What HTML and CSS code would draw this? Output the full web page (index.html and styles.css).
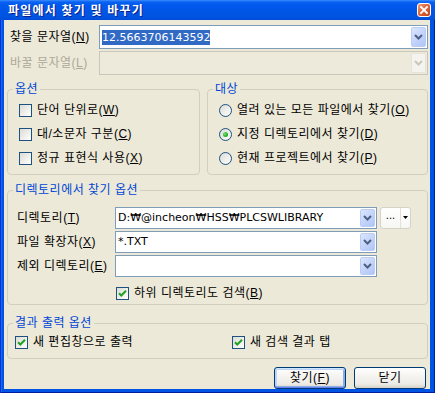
FILE: index.html
```html
<!DOCTYPE html>
<html lang="ko">
<head>
<meta charset="utf-8">
<title>파일에서 찾기 및 바꾸기</title>
<link rel="stylesheet" href="styles.css">
</head>
<body>
<div class="window">
  <div class="titlebar">
    <span class="title">파일에서 찾기 및 바꾸기</span>
    <span class="close">
      <svg width="14" height="14" viewBox="0 0 14 14">
        <defs>
          <linearGradient id="cg" x1="0" y1="0" x2="1" y2="1">
            <stop offset="0" stop-color="#F0A080"/>
            <stop offset="0.45" stop-color="#E0643A"/>
            <stop offset="1" stop-color="#C2401A"/>
          </linearGradient>
        </defs>
        <rect x="0.5" y="0.5" width="13" height="13" rx="2.5" fill="url(#cg)" stroke="#FFFFFF"/>
        <path d="M4 4 L10 10 M10 4 L4 10" stroke="#FFFFFF" stroke-width="1.8" stroke-linecap="square"/>
      </svg>
    </span>
  </div>

  <div class="client">
    <div class="toprow">
      <span class="lbl">찾을 문자열(<u>N</u>)</span>
      <div class="combo big">
        <span class="ctext"><span class="sel">12.5663706143592</span></span>
        <span class="dd"><svg width="9" height="6" viewBox="0 0 9 6"><path d="M1 1 L4.5 4.5 L8 1" fill="none" stroke="#4D6185" stroke-width="2"/></svg></span>
      </div>
    </div>
    <div class="toprow">
      <span class="lbl dis">바꿀 문자열(<u>L</u>)</span>
      <div class="combo big disabled">
        <span class="ctext"></span>
        <span class="dd"><svg width="9" height="6" viewBox="0 0 9 6"><path d="M1 1 L4.5 4.5 L8 1" fill="none" stroke="#C9C7BA" stroke-width="2"/></svg></span>
      </div>
    </div>

    <div class="groups">
      <fieldset class="group g-opt">
        <legend>옵션</legend>
        <div class="gbody opt-body">
          <label class="item"><span class="cb"></span><span class="t">단어 단위로(<u>W</u>)</span></label>
          <label class="item"><span class="cb"></span><span class="t">대/소문자 구분(<u>C</u>)</span></label>
          <label class="item"><span class="cb"></span><span class="t">정규 표현식 사용(<u>X</u>)</span></label>
        </div>
      </fieldset>
      <fieldset class="group g-target">
        <legend>대상</legend>
        <div class="gbody opt-body">
          <label class="item"><span class="rb"></span><span class="t">열려 있는 모든 파일에서 찾기(<u>O</u>)</span></label>
          <label class="item"><span class="rb on"></span><span class="t">지정 디렉토리에서 찾기(<u>D</u>)</span></label>
          <label class="item"><span class="rb"></span><span class="t">현재 프로젝트에서 찾기(<u>P</u>)</span></label>
        </div>
      </fieldset>
    </div>

    <fieldset class="group g-dir">
      <legend>디렉토리에서 찾기 옵션</legend>
      <div class="gbody dir-body">
        <span class="lbl">디렉토리(<u>T</u>)</span>
        <div class="combo">
          <span class="ctext">D:₩@incheon₩HSS₩PLCSWLIBRARY</span>
          <span class="dd"><svg width="9" height="6" viewBox="0 0 9 6"><path d="M1 1 L4.5 4.5 L8 1" fill="none" stroke="#4D6185" stroke-width="2"/></svg></span>
        </div>
        <div class="split">
          <span class="dots">...</span>
          <span class="arrow"><svg width="5" height="3" viewBox="0 0 5 3"><path d="M0 0 H5 L2.5 3 Z" fill="#000"/></svg></span>
        </div>

        <span class="lbl">파일 확장자(<u>X</u>)</span>
        <div class="combo">
          <span class="ctext">*.TXT</span>
          <span class="dd"><svg width="9" height="6" viewBox="0 0 9 6"><path d="M1 1 L4.5 4.5 L8 1" fill="none" stroke="#4D6185" stroke-width="2"/></svg></span>
        </div>
        <span></span>

        <span class="lbl">제외 디렉토리(<u>E</u>)</span>
        <div class="combo">
          <span class="ctext"></span>
          <span class="dd"><svg width="9" height="6" viewBox="0 0 9 6"><path d="M1 1 L4.5 4.5 L8 1" fill="none" stroke="#4D6185" stroke-width="2"/></svg></span>
        </div>
        <span></span>

        <label class="item sub"><span class="cb checked"><svg width="11" height="11" viewBox="0 0 11 11"><path d="M2 5.2 L4.3 7.5 L9 2.8" fill="none" stroke="#21A121" stroke-width="2"/></svg></span><span class="t">하위 디렉토리도 검색(<u>B</u>)</span></label>
      </div>
    </fieldset>

    <fieldset class="group g-out">
      <legend>결과 출력 옵션</legend>
      <div class="gbody out-body">
        <label class="item"><span class="cb checked"><svg width="11" height="11" viewBox="0 0 11 11"><path d="M2 5.2 L4.3 7.5 L9 2.8" fill="none" stroke="#21A121" stroke-width="2"/></svg></span><span class="t">새 편집창으로 출력</span></label>
        <label class="item"><span class="cb checked"><svg width="11" height="11" viewBox="0 0 11 11"><path d="M2 5.2 L4.3 7.5 L9 2.8" fill="none" stroke="#21A121" stroke-width="2"/></svg></span><span class="t">새 검색 결과 탭</span></label>
      </div>
    </fieldset>

    <div class="buttons">
      <button class="btn default">찾기(<u>F</u>)</button>
      <button class="btn">닫기</button>
    </div>
  </div>
</div>
</body>
</html>
```

FILE: styles.css
```css
* { box-sizing: border-box; }

html, body {
  margin: 0;
  padding: 0;
}

body {
  width: 435px;
  height: 393px;
  font-family: "Liberation Sans", "Noto Sans CJK KR", sans-serif;
  font-size: 12px;
  line-height: 14px;
  letter-spacing: 0.5px;
  color: #000;
  overflow: hidden;
}

u { text-decoration: underline; text-underline-offset: 1px; }

.window {
  width: 435px;
  height: 393px;
  background: #0054E3;
  padding: 0 5px 4px 4px;
  display: flex;
  flex-direction: column;
  box-shadow: inset 1px 0 0 #0831D9, inset -1px 0 0 #001EA0, inset 0 -1px 0 #001EA0, inset 2px 0 0 #166AEE;
}

.titlebar {
  height: 22px;
  margin: 0 -5px 0 -4px;
  padding: 0 4px 0 8px;
  display: flex;
  align-items: center;
  justify-content: space-between;
  background: linear-gradient(#3A8CFF 0px, #0A62F0 2px, #0058EE 5px, #0055E5 12px, #0053E0 18px, #0046D0 21px, #0040C8 22px);
}

.title {
  color: #fff;
  font-weight: bold;
  font-size: 12px;
  line-height: 14px;
  letter-spacing: 1.2px;
  text-shadow: 1px 1px 0 #0A1E88;
  padding-top: 1px;
}

.close {
  display: flex;
  width: 14px;
  height: 14px;
}

.client {
  flex: 1;
  background: #ECE9D8;
  padding: 5px 2px 0 3px;
  display: flex;
  flex-direction: column;
}

.toprow {
  display: grid;
  grid-template-columns: 92px 1fr;
  height: 24px;
  margin-bottom: 2px;
  align-items: center;
}

.toprow .lbl { padding-left: 3px; }

.lbl { white-space: nowrap; }
.lbl.dis { color: #ACA899; }

/* combo box */
.combo {
  display: flex;
  height: 22px;
  border: 1px solid #7F9DB9;
  background: #fff;
  padding: 1px;
}
.combo.big { height: 24px; }
.combo.disabled {
  border-color: #C9C7BA;
  background: #EDEADB;
}

.ctext {
  flex: 1;
  display: flex;
  align-items: center;
  padding-left: 1px;
  font-family: "DejaVu Sans", sans-serif;
  font-size: 11px;
  letter-spacing: 0;
  white-space: nowrap;
  overflow: hidden;
}

.sel {
  background: #316AC5;
  color: #fff;
  line-height: 15px;
}

.dd {
  width: 15px;
  display: flex;
  align-items: center;
  justify-content: center;
  border: 1px solid #BACDF7;
  border-radius: 2px;
  background: linear-gradient(135deg, #DCE6FD 0%, #C4D4FA 50%, #AFC5F5 100%);
}
.combo.disabled .dd {
  border-color: #E6E4DA;
  background: #F4F3EE;
}

/* group boxes */
.groups {
  display: flex;
  gap: 7px;
  margin-top: 5px;
}

.group {
  margin: 0;
  padding: 0;
  border: 1px solid #D0D0BF;
  border-radius: 4px;
  min-width: 0;
}

.group legend {
  margin-left: 5px;
  padding: 0 2px;
  height: 14px;
  line-height: 14px;
  color: #0046D5;
}

.g-opt { width: 193px; }
.g-target { flex: 1; }

.opt-body {
  padding: 2px 4px 4px 11px;
}

.item {
  display: flex;
  align-items: center;
  gap: 5px;
  white-space: nowrap;
}

.opt-body .item { height: 24px; }

.cb {
  width: 13px;
  height: 13px;
  flex: none;
  border: 1px solid #1C5180;
  background: linear-gradient(135deg, #DCDCD7 0%, #F0F0EC 60%, #FFFFFF 100%);
  display: flex;
  align-items: center;
  justify-content: center;
}

.rb {
  width: 13px;
  height: 13px;
  flex: none;
  border: 1px solid #1C5180;
  border-radius: 50%;
  background: linear-gradient(135deg, #DCDCD7 0%, #F0F0EC 60%, #FFFFFF 100%);
  display: flex;
  align-items: center;
  justify-content: center;
}
.rb.on::after {
  content: "";
  width: 5px;
  height: 5px;
  border-radius: 50%;
  background: radial-gradient(circle at 35% 35%, #7BE07B 0%, #2FB52F 50%, #1E961E 100%);
}

/* directory group */
.g-dir { margin-top: 8px; }

.dir-body {
  display: grid;
  grid-template-columns: 95px 262px 31px;
  column-gap: 3px;
  row-gap: 2px;
  grid-auto-rows: 22px;
  align-items: center;
  padding: 10px 0 3px 9px;
}

.dir-body .item.sub {
  grid-column: 2 / 4;
  margin-top: 2px;
  padding-left: 1px;
  height: 16px;
  align-self: end;
}

.split {
  height: 22px;
  display: flex;
  border: 1px solid #D5D2C8;
  border-radius: 3px;
  background: linear-gradient(#FFFFFF, #F6F6F3);
}
.dots {
  width: 20px;
  text-align: center;
  font-family: "DejaVu Sans", sans-serif;
  font-size: 10px;
  letter-spacing: 0;
  line-height: 16px;
  border-right: 1px solid #E2E0D8;
}
.arrow {
  flex: 1;
  display: flex;
  align-items: center;
  justify-content: center;
  padding-bottom: 2px;
}

/* output group */
.g-out { margin-top: 11px; }

.out-body {
  display: grid;
  grid-template-columns: 217px auto;
  padding: 4px 0 8px 7px;
}
.out-body .item { height: 16px; }

/* buttons */
.buttons {
  display: flex;
  justify-content: flex-end;
  gap: 8px;
  margin-top: 8px;
  padding-right: 2px;
}

.btn {
  width: 72px;
  height: 22px;
  padding: 0;
  font: inherit;
  letter-spacing: 0.5px;
  color: #000;
  border: 1px solid #003C74;
  border-radius: 3px;
  background: linear-gradient(#FFFFFF 0%, #F5F4F0 40%, #ECEBE6 80%, #D6D0C5 100%);
}
.btn.default {
  box-shadow: inset 0 1px 0 #CEE7FF, inset 0 -1px 0 #6982EE, inset 1px 0 0 #B8D2F8, inset -1px 0 0 #89ADE4,
              inset 0 2px 0 #BCD4F6, inset 0 -2px 0 #89ADE4, inset 2px 0 0 #BCD4F6, inset -2px 0 0 #89ADE4;
}
```
